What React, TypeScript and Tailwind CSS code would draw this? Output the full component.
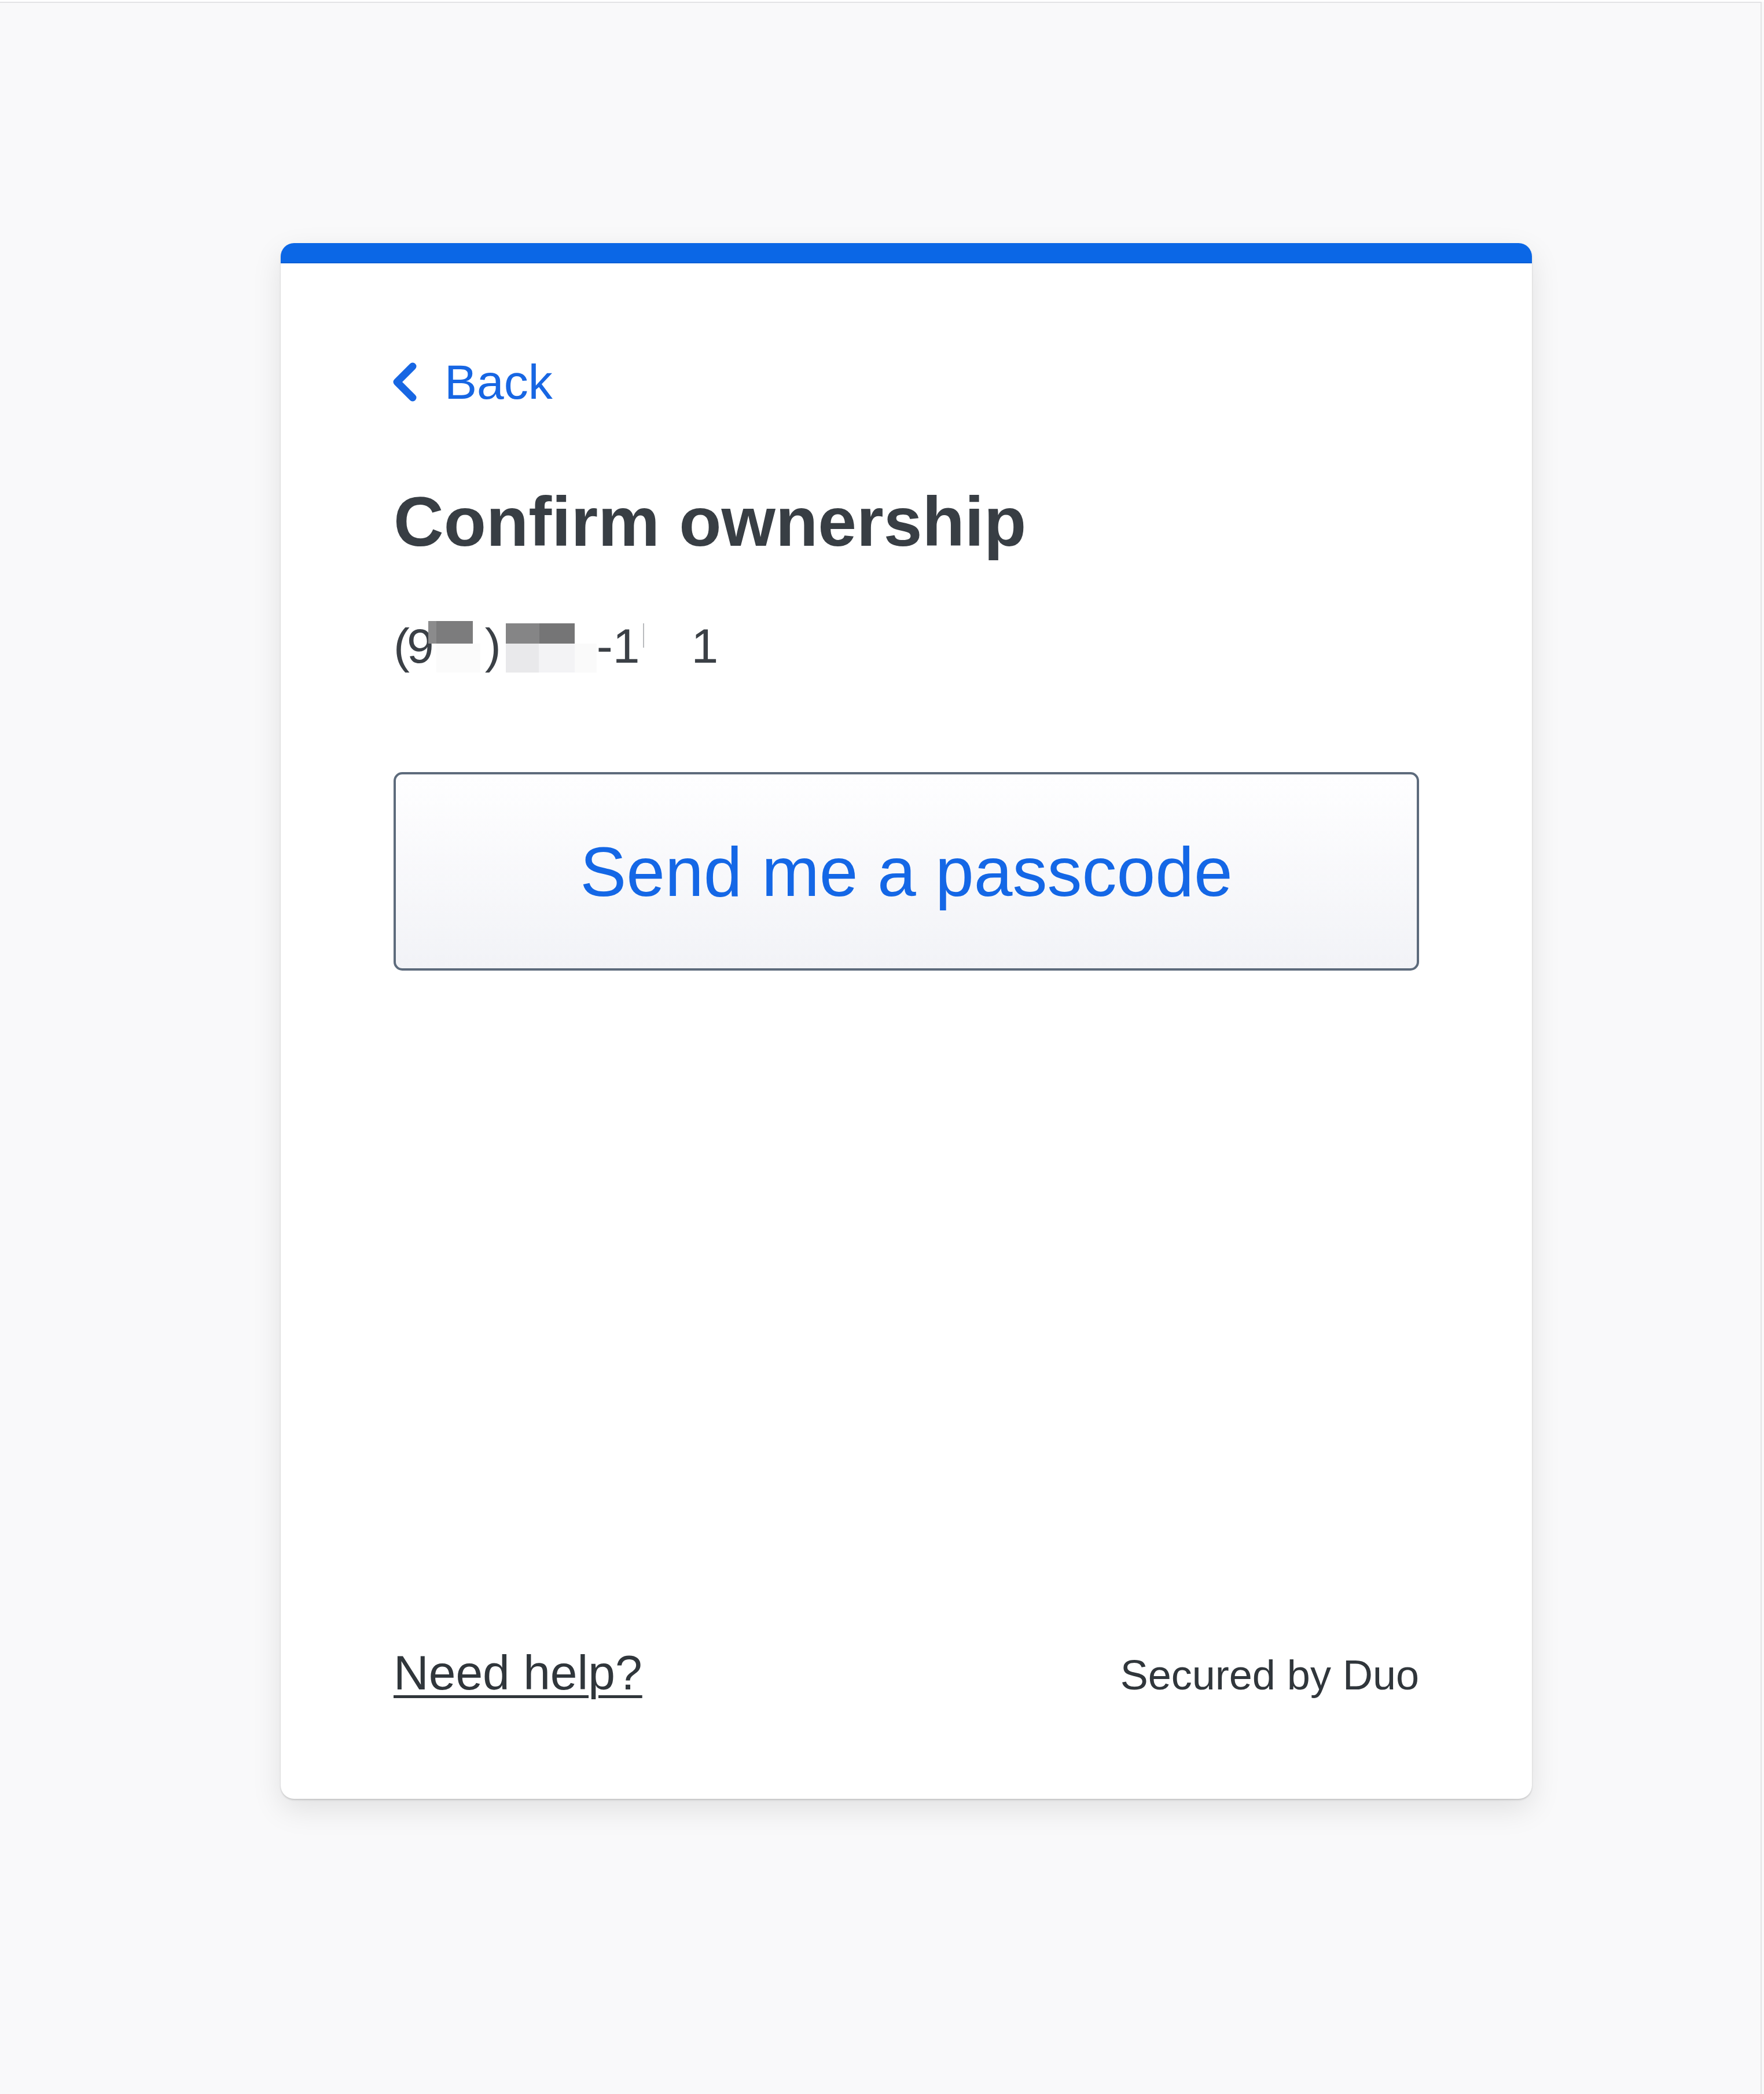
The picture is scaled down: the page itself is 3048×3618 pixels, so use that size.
export default function App() {
  return (
    <div className="min-h-[3618px] bg-[#f9f9fa] font-['Liberation_Sans',Arial,sans-serif]">
      <div className="mt-[3px] w-[3044px] min-h-[3615px] border-t-2 border-r-2 border-[#e3e3e5] pt-[415px]">
        {/* Card */}
        <div className="ml-[485px] w-[2162px] h-[2688px] flex flex-col bg-white rounded-[23px] overflow-hidden shadow-[0_2px_3px_rgba(0,0,0,0.16),0_18px_52px_rgba(0,0,0,0.10)]">
          <div className="h-[35px] bg-[#0b67e6] border-b-2 border-[#0a5fd6] shrink-0" />

          <div className="flex flex-col flex-1 px-[195px]">
            {/* Back */}
            <div className="mt-[163px] flex items-center h-[84px]">
              <svg width="42" height="68" viewBox="0 0 42 68" className="shrink-0 -ml-[2px]">
                <path d="M35 7 L8 34 L35 61" fill="none" stroke="#1766e3" strokeWidth="13" strokeLinecap="round" strokeLinejoin="round" />
              </svg>
              <span className="ml-[48px] text-[84px] leading-[84px] text-[#1766e3]">Back</span>
            </div>

            {/* Title */}
            <h1 className="mt-[139px] text-[120px] leading-[120px] font-bold text-[#383e44]">Confirm ownership</h1>

            {/* Phone (redacted) */}
            <div className="mt-[113px] flex items-start h-[88px] text-[84px] leading-[84px] text-[#3b4046]">
              <span>(</span>
              <span className="-ml-[5px]">9</span>
              <span className="-ml-[10px] mt-[-1px] flex flex-col w-[90px]">
                <span className="flex h-[39px]">
                  <span className="w-[14px] bg-[#8b8b8c]" />
                  <span className="w-[63px] bg-[#7c7c7d]" />
                </span>
                <span className="flex h-[50px]">
                  <span className="w-[14px]" />
                  <span className="w-[76px] bg-[#fbfbfb]" />
                </span>
              </span>
              <span className="ml-[8px]">)</span>
              <span className="ml-[8px] mt-[3px] flex flex-col w-[157px]">
                <span className="flex h-[35px]">
                  <span className="w-[58px] bg-[#858586]" />
                  <span className="w-[61px] bg-[#757576]" />
                </span>
                <span className="flex h-[50px]">
                  <span className="w-[57px] bg-[#e9e9eb]" />
                  <span className="w-[62px] bg-[#f3f3f5]" />
                  <span className="w-[38px] bg-[#fafafa]" />
                </span>
              </span>
              <span>-1</span>
              <span className="ml-[6px] mt-[3px] w-[2px] h-[42px] bg-[#b9bbbe]" />
              <span className="ml-[81px]">1</span>
            </div>

            {/* Button */}
            <button className="mt-[172px] h-[343px] w-full flex items-center justify-center rounded-[15px] border-[4px] border-[#5d6b7c] bg-gradient-to-b from-[#fefeff] to-[#f2f3f7] text-[120px] leading-[120px] text-[#1467e6]">
              Send me a passcode
            </button>

            {/* Footer */}
            <div className="mt-auto mb-[176px] flex items-baseline justify-between h-[84px]">
              <a className="text-[84px] leading-[84px] text-[#30363b] underline decoration-[5px] underline-offset-[10px]">Need help?</a>
              <span className="text-[72px] leading-[84px] text-[#30363b]">Secured by Duo</span>
            </div>
          </div>
        </div>
      </div>
    </div>
  );
}
